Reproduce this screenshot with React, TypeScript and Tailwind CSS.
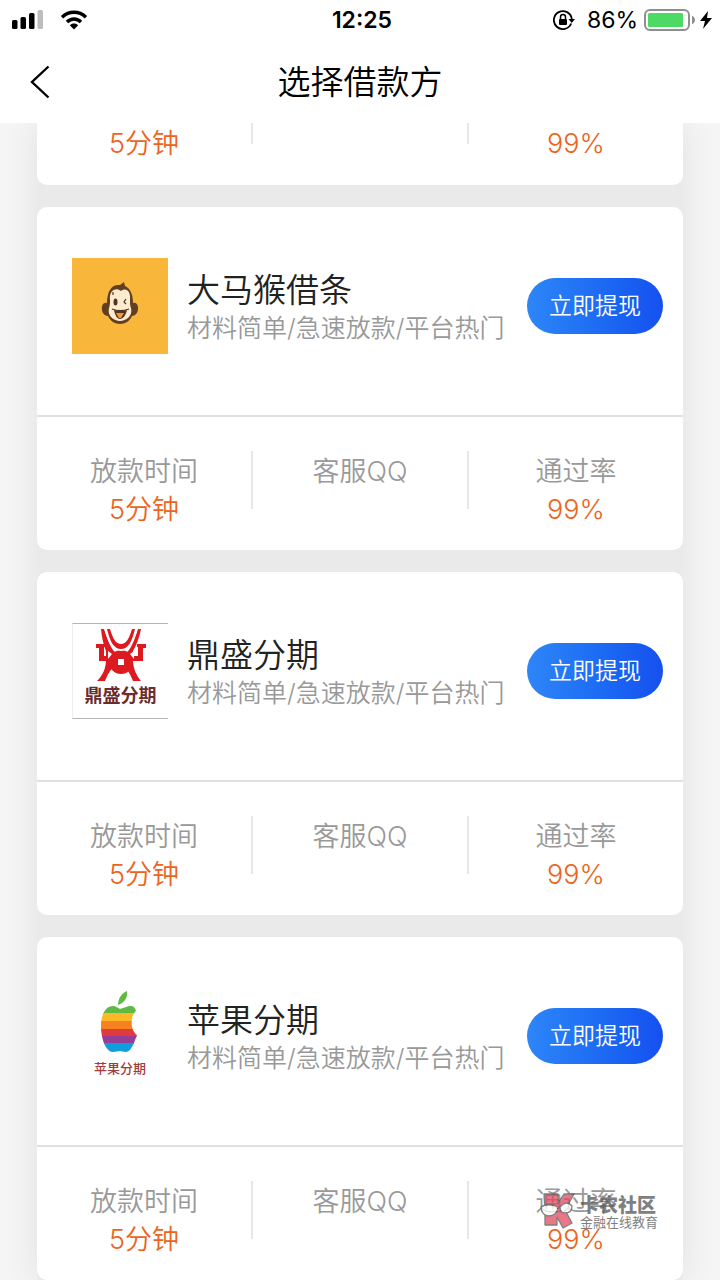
import type { ReactNode } from "react";

type Lender = {
  name: string;
  logo: ReactNode;
};

function MonkeyLogo() {
  return (
    <svg viewBox="0 0 96 96" className="h-24 w-24 shrink-0" aria-hidden="true">
      <rect width="96" height="96" fill="#f8b63b" />
      <path d="M35 45c-7-2-7 13 1 13 2 5 7 8 12 8s10-3 12-8c8 0 8-15 1-13 0-9-3-15-8-17l-1-4-4 3c-9-1-13 7-13 18z" fill="#604020" />
      <path d="M38 42c-1-10 6-13 11-9 5-4 10 0 9 9 0 4 0 5 1 8 2 8-5 13-11 13s-13-5-11-13c1-3 1-5 1-8z" fill="#fcebcf" />
      <ellipse cx="43.500" cy="44" rx="2" ry="3.500" fill="#50341f" />
      <path d="M54 41l-2 3 2 2M41 37v-3M40 51c5 2 12 2 17 0" fill="none" stroke="#50341f" strokeWidth="1.200" />
      <path d="M42 52c4 1 9 1 13 0-1 5-4 9-7 9s-5-4-6-9z" fill="#50341f" />
      <path d="M44 55h8l-3 5h-2z" fill="#ef9a3c" />
    </svg>
  );
}

function TripodLogo() {
  return (
    <div className="flex h-24 w-24 shrink-0 flex-col items-center border-y border-[#b5b5b5] border-l border-l-[#eeeeee] bg-white pt-1">
      <svg viewBox="0 0 50 56" className="h-14 w-[50px] shrink-0" aria-hidden="true">
        <g fill="#dd1a20">
          <path d="M5 1h3c3 9 6 17 9 21 4 5 12 5 16 0 3-4 6-12 9-21h3c-2 10-5 17-8 22v9c0 8 3 15 8 21h-8c-3-7-5-11-8-13-4 3-8 3-12 0-3 2-5 6-8 13H1c6-6 9-13 9-21v-9C8 18 6 11 5 1z" />
          <path d="M0 16h9v3H8v9h5v5H3V20H0zM50 16h-9v3h1v9h-5v5h10V20h3z" />
          <circle cx="25" cy="34" r="12" />
        </g>
        <path d="M8 0h4c3 12 7 19 13 19S35 12 38 0h4c-4 14-8 23-17 23S12 14 8 0z" fill="#fff" />
        <path d="M11 1h3c3 10 6 15 11 15S33 11 36 1h3c-3 13-7 20-14 20S14 14 11 1z" fill="#dd1a20" />
        <path d="M12 31v-8l4 3zM38 31v-8l-4 3z" fill="#fff" />
        <rect x="22" y="31" width="6" height="6" fill="#fff" />
      </svg>
      <span className="text-lg leading-6 font-bold text-[#6b2c2c]">鼎盛分期</span>
    </div>
  );
}

function AppleLogo() {
  return (
    <div className="flex h-24 w-24 shrink-0 flex-col items-center">
      <svg viewBox="0 0 40 64" className="mt-0.5 h-16 w-10 shrink-0" aria-hidden="true">
        <defs>
          <clipPath id="apple-body">
            <path d="M20 19c4-1 7-3 11-3 3 0 4 2 5 5-6 5-6 19 1 24-3 8-6 17-11 17-3 0-4-1-6-1s-4 1-7 1C6 62 1 49 1 36c0-12 5-20 12-20 3 0 5 2 7 3z" />
          </clipPath>
        </defs>
        <path d="M18 15c0-7 4-12 9-14 1 7-3 12-9 14z" fill="#5fb943" />
        <g clipPath="url(#apple-body)">
          <rect width="40" height="24" fill="#5fb943" />
          <rect y="23" width="40" height="9" fill="#fdb827" />
          <rect y="31" width="40" height="9" fill="#f5821f" />
          <rect y="39" width="40" height="8" fill="#e03a3e" />
          <rect y="46" width="40" height="8" fill="#963d97" />
          <rect y="53" width="40" height="10" fill="#109ddc" />
        </g>
      </svg>
      <span className="mt-1 text-[13px] leading-5 font-medium text-[#a23a3a]">苹果分期</span>
    </div>
  );
}

const lenders: Lender[] = [
  { name: "大马猴借条", logo: <MonkeyLogo /> },
  { name: "鼎盛分期", logo: <TripodLogo /> },
  { name: "苹果分期", logo: <AppleLogo /> },
];

function StatusBar() {
  return (
    <div className="grid h-10 grid-cols-3 items-center pr-2 pl-3 text-black">
      <div className="flex items-center gap-4">
        <svg viewBox="0 0 32 20" className="h-5 w-8" aria-hidden="true">
          <rect x="0" y="10" width="5.500" height="9" rx="1.500" />
          <rect x="8.500" y="7" width="5.500" height="12" rx="1.500" />
          <rect x="17" y="3" width="5.500" height="16" rx="1.500" />
          <rect x="25.500" y="0" width="5.500" height="19" rx="1.500" fill="#bdbdbd" />
        </svg>
        <svg viewBox="0 0 28 20" className="h-5 w-7" aria-hidden="true">
          <path d="M2 7.200C9 .6 19 .6 26 7.200M7 12c4-4 10-4 14 0" fill="none" stroke="#000" strokeWidth="3.400" />
          <path d="M9.800 15.200c2.400-2.400 6-2.400 8.400 0L14 19.500z" />
        </svg>
      </div>
      <time className="text-center text-[23px] leading-8 font-semibold">12:25</time>
      <div className="flex items-center justify-end">
        <svg viewBox="0 0 22 20" className="mr-3 h-5 w-[22px]" aria-hidden="true">
          <path d="M18.200 13.500A9 9 0 1 1 18.800 9" fill="none" stroke="#000" strokeWidth="1.800" />
          <path d="M15.500 9h6.500l-3.300 4z" />
          <rect x="6" y="9" width="8" height="6" rx="1" />
          <path d="M7.500 9V7a2.500 2.500 0 0 1 5 0v2" fill="none" stroke="#000" strokeWidth="1.500" />
        </svg>
        <span className="mr-1.5 text-[23px] leading-8">86%</span>
        <svg viewBox="0 0 52 22" className="h-[22px] w-[52px]" aria-hidden="true">
          <rect x="1" y="1" width="44" height="20" rx="5" fill="none" stroke="#8f8f8f" strokeWidth="2" />
          <rect x="4" y="4" width="35" height="14" rx="1.500" fill="#4cd964" />
          <path d="M48 7c4 1 4 7 0 8z" fill="#8f8f8f" />
        </svg>
        <svg viewBox="0 0 12 18" className="ml-1 h-[18px] w-3" aria-hidden="true">
          <path d="M8 0L0 10h5L3 18l9-11H7z" />
        </svg>
      </div>
    </div>
  );
}

function Stat({ label, value, showLabel }: { label: string; value?: string; showLabel: boolean }) {
  return (
    <div className="flex flex-col items-center pt-0.5 text-[27px] leading-[38px] font-[350]">
      {showLabel && <dt className="text-[#999999]">{label}</dt>}
      <dd className="h-[38px] text-[#ec6420]">{value}</dd>
    </div>
  );
}

function Divider({ short }: { short: boolean }) {
  return <div className={short ? "h-[21px] w-0.5 bg-[#e6e6e6]" : "h-[58px] w-0.5 bg-[#e6e6e6]"} />;
}

function Stats({ showLabels = true }: { showLabels?: boolean }) {
  return (
    <dl className="grid grid-cols-[1fr_2px_1fr_2px_1fr]">
      <Stat label="放款时间" value="5分钟" showLabel={showLabels} />
      <Divider short={!showLabels} />
      <Stat label="客服QQ" showLabel={showLabels} />
      <Divider short={!showLabels} />
      <Stat label="通过率" value="99%" showLabel={showLabels} />
    </dl>
  );
}

function LenderCard({ lender }: { lender: Lender }) {
  return (
    <article className="shrink-0 rounded-[10px] bg-white">
      <div className="flex h-[208px] items-start pt-[51px] pr-5 pl-[35px]">
        {lender.logo}
        <div className="ml-[19px] min-w-0 flex-1 pt-3 whitespace-nowrap">
          <h2 className="text-[33px] leading-10 font-[350] text-[#222222]">{lender.name}</h2>
          <p className="text-[25px] leading-9 font-[350] text-[#999999]">材料简单/急速放款/平台热门</p>
        </div>
        <button
          type="button"
          className="mt-5 h-14 w-34 shrink-0 rounded-full bg-linear-to-r from-[#2e86f8] to-[#1650ef] text-[23px] leading-8 font-[350] text-white"
        >
          立即提现
        </button>
      </div>
      <div className="h-[135px] border-t-2 border-[#e0e0e0] pt-[34px]">
        <Stats />
      </div>
    </article>
  );
}

function Watermark() {
  return (
    <div className="absolute right-[62px] bottom-[50px] flex items-center gap-1 text-[#555555] opacity-75">
      <svg viewBox="0 0 36 38" className="h-[38px] w-9" aria-hidden="true">
        <g stroke="#555" strokeWidth="1.300" strokeLinejoin="round">
          <path d="M4 2h14v9l6-9h10l-9 16 7 13-9 5-6-11v8H5V19z" fill="#e34a60" />
          <path d="M1 15c4-3 11-3 17 0 0 5-4 9-9 9s-8-4-8-9zM20 15c4-5 9-5 12-1 0 5-3 7-7 7-3 0-5-2-5-6z" fill="#fff" />
        </g>
      </svg>
      <div className="flex flex-col pt-0.5">
        <span className="text-[19px] leading-5 font-black">卡农社区</span>
        <span className="text-[13px] leading-3">金融在线教育</span>
      </div>
    </div>
  );
}

export default function App() {
  return (
    <div
      lang="zh-CN"
      className="relative flex h-screen flex-col overflow-hidden bg-[#f5f5f5] [font-family:Inter,'Noto_Sans_CJK_SC',sans-serif]"
    >
      <header className="z-10 shrink-0 bg-white">
        <StatusBar />
        <div className="grid h-[83px] grid-cols-[80px_1fr_80px] items-center">
          <button type="button" aria-label="返回" className="flex h-full items-center pl-[30px]">
            <svg viewBox="0 0 20 34" className="h-[34px] w-5" aria-hidden="true">
              <path d="M18.500 1.500L2 17l16.500 15.500" fill="none" stroke="#000" strokeWidth="2.400" />
            </svg>
          </button>
          <h1 className="text-center text-[33px] leading-10 font-[350] text-black">选择借款方</h1>
        </div>
      </header>
      <main className="flex min-h-0 flex-1 flex-col px-[37px]">
        <div className="flex flex-1 flex-col justify-end gap-[22px] bg-[#eaeaea] shadow-[0_0_32px_0_#e0e0e0]">
          <article className="h-[62px] shrink-0 rounded-b-[10px] bg-white">
            <Stats showLabels={false} />
          </article>
          {lenders.map((lender) => (
            <LenderCard key={lender.name} lender={lender} />
          ))}
        </div>
      </main>
      <Watermark />
    </div>
  );
}
